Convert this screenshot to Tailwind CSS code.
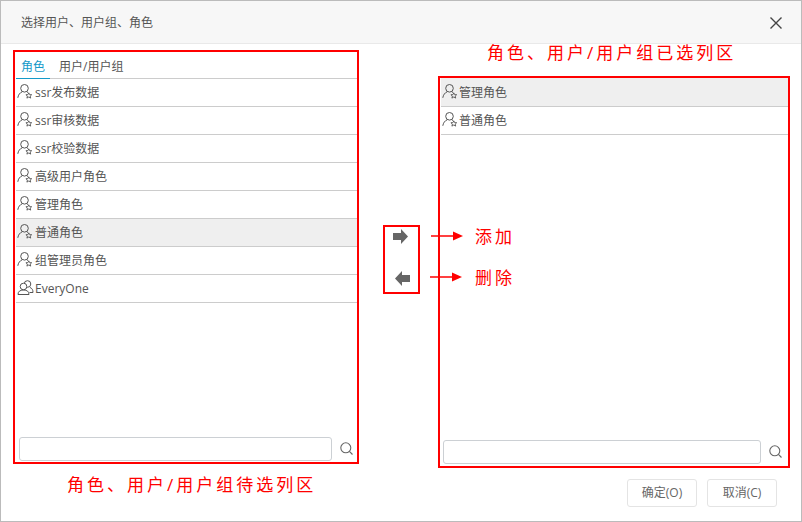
<!DOCTYPE html>
<html>
<head>
<meta charset="UTF-8">
<script src="https://cdn.jsdelivr.net/npm/@tailwindcss/browser@4"></script>
<title>选择用户、用户组、角色</title>
</head>
<body class="bg-white">
<svg width="0" height="0" class="absolute">
  <defs>
    <g id="role" fill="none" stroke="#555" stroke-width="1">
      <circle cx="7.500" cy="4.300" r="3.800"/>
      <path d="M0.800 13.800C1.300 10.800 2.800 8.800 5.200 7.800M9.800 7.800C10.400 8 10.900 8.300 11.300 8.700"/>
      <path d="M11.800 8.900l.9 1.800h2l-1.500 1.400.5 2-1.900-1.100-1.900 1.100.5-2-1.500-1.400h2z" stroke-width="0.900"/>
    </g>
    <g id="group" fill="none" stroke="#555" stroke-width="1">
      <circle cx="10.500" cy="4" r="3.300"/>
      <circle cx="6.500" cy="6.500" r="3.300" fill="#fff"/>
      <path d="M1 14.500C1 11.500 3 10 6.500 10S12 11.500 12 14.500z"/>
      <path d="M13 7.500C15 8.200 16 9.800 16 12.500H12.500"/>
    </g>
    <g id="search" fill="none" stroke="#666" stroke-width="1.100">
      <circle cx="5.800" cy="5.800" r="5"/>
      <path d="M9.400 9.400L12.500 12.500"/>
    </g>
  </defs>
</svg>

<div class="w-[802px] h-[522px] border border-[#bbb] flex flex-col overflow-hidden text-[12px] text-[#555] font-['Open_Sans','Noto_Sans_CJK_SC',sans-serif]">
  <!-- header -->
  <div class="h-[43px] shrink-0 bg-[#f7f7f7] border-b border-[#e9e9e9] flex items-center justify-between pl-5 pr-[18px] pt-px">
    <span>选择用户、用户组、角色</span>
    <svg width="14" height="14" viewBox="0 0 14 14" fill="none" stroke="#444" stroke-width="1.400"><path d="M1.500 1.500L12.500 12.500M12.500 1.500L1.500 12.500"/></svg>
  </div>

  <div class="flex flex-1 pl-3 min-h-0">
    <!-- left -->
    <div class="w-[346px] shrink-0 pt-[6px] flex flex-col">
      <div class="h-[414px] border-2 border-[#f00] flex flex-col pl-px">
        <div class="h-[27px] shrink-0 border-b border-[#ccc] flex items-end">
          <span class="w-[34px] h-[27px] -mb-px border-b border-[#159ac9] text-[#159ac9] text-center leading-[29px]">角色</span>
          <span class="ml-[9px] h-[26px] leading-[29px]">用户/用户组</span>
        </div>
        <div class="flex-1">
          <div class="h-7 border-b border-[#ccc] flex items-center pl-[1px] gap-px"><svg width="17" height="17" viewBox="0 0 17 17"><use href="#role"/></svg><span>ssr发布数据</span></div>
          <div class="h-7 border-b border-[#ccc] flex items-center pl-[1px] gap-px"><svg width="17" height="17" viewBox="0 0 17 17"><use href="#role"/></svg><span>ssr审核数据</span></div>
          <div class="h-7 border-b border-[#ccc] flex items-center pl-[1px] gap-px"><svg width="17" height="17" viewBox="0 0 17 17"><use href="#role"/></svg><span>ssr校验数据</span></div>
          <div class="h-7 border-b border-[#ccc] flex items-center pl-[1px] gap-px"><svg width="17" height="17" viewBox="0 0 17 17"><use href="#role"/></svg><span>高级用户角色</span></div>
          <div class="h-7 border-b border-[#ccc] flex items-center pl-[1px] gap-px"><svg width="17" height="17" viewBox="0 0 17 17"><use href="#role"/></svg><span>管理角色</span></div>
          <div class="h-7 border-b border-[#ccc] bg-[#efefef] flex items-center pl-[1px] gap-px"><svg width="17" height="17" viewBox="0 0 17 17"><use href="#role"/></svg><span>普通角色</span></div>
          <div class="h-7 border-b border-[#ccc] flex items-center pl-[1px] gap-px"><svg width="17" height="17" viewBox="0 0 17 17"><use href="#role"/></svg><span>组管理员角色</span></div>
          <div class="h-7 border-b border-[#ccc] flex items-center pl-[1px] gap-px"><svg width="17" height="17" viewBox="0 0 17 17"><use href="#group"/></svg><span>EveryOne</span></div>
        </div>
        <div class="flex items-center pl-[3px] pb-px">
          <div class="w-[313px] h-[24px] border border-[#ccd0d4] rounded-[3px]"></div>
          <svg class="ml-[8px]" width="14" height="14" viewBox="0 0 14 14"><use href="#search"/></svg>
        </div>
      </div>
      <div class="mt-[9px] pl-[54px] text-[17px] leading-[24px] tracking-[3px] text-[#f00] whitespace-nowrap">角色、用户/用户组待选列区</div>
    </div>

    <!-- middle -->
    <div class="w-[79px] shrink-0 pt-[181px] pl-[24px]">
      <div class="w-[37px] h-[69px] border-2 border-[#f00] flex flex-col justify-between pt-[2px] pb-[6px]">
        <svg width="15" height="15" viewBox="0 0 15 15" class="ml-[8px]"><path d="M0 4h8V0l7 7.500-7 7.500v-4H0z" fill="#666"/></svg>
        <svg width="15" height="15" viewBox="0 0 15 15" class="ml-[10px]"><path d="M15 4H7V0L0 7.500 7 15v-4h8z" fill="#666"/></svg>
      </div>
    </div>

    <!-- right -->
    <div class="w-[352px] shrink-0 flex flex-col">
      <div class="h-[32px] pl-[49px] text-[17px] leading-[18px] tracking-[3px] text-[#f00] whitespace-nowrap">角色、用户/用户组已选列区</div>
      <div class="h-[392px] border-2 border-[#f00] flex flex-col pl-px">
        <div class="flex-1">
          <div class="h-[29px] pt-px border-b border-[#ccc] bg-[#efefef] flex items-center pl-[1px]"><svg width="17" height="17" viewBox="0 0 17 17"><use href="#role"/></svg><span>管理角色</span></div>
          <div class="h-7 border-b border-[#ccc] flex items-center pl-[1px]"><svg width="17" height="17" viewBox="0 0 17 17"><use href="#role"/></svg><span>普通角色</span></div>
        </div>
        <div class="flex items-center pl-[2px] pb-[2px]">
          <div class="w-[318px] h-[24px] border border-[#ccd0d4] rounded-[3px]"></div>
          <svg class="ml-[8px]" width="14" height="14" viewBox="0 0 14 14"><use href="#search"/></svg>
        </div>
      </div>
      <div class="flex justify-end gap-[10px] mt-[11px] pr-[13px]">
        <div class="w-[70px] h-[28px] border border-[#e4e4e4] rounded-[3px] text-center leading-[26px] text-[#666]">确定(O)</div>
        <div class="w-[70px] h-[28px] border border-[#e4e4e4] rounded-[3px] text-center leading-[26px] text-[#666]">取消(C)</div>
      </div>
    </div>
  </div>
</div>

<!-- red callouts over the dialog -->
<div class="absolute left-[431px] top-[224px] flex items-center h-[24px] text-[#f00] text-[17px] tracking-[3px] font-['Noto_Sans_CJK_SC',sans-serif]">
  <svg width="32" height="12" viewBox="0 0 32 12"><path d="M0 6H22" stroke="#f00" stroke-width="1.500"/><path d="M22 1.500L32 6 22 10.500z" fill="#f00"/></svg>
  <span class="ml-[12px]">添加</span>
</div>
<div class="absolute left-[430px] top-[265px] flex items-center h-[24px] text-[#f00] text-[17px] tracking-[3px] font-['Noto_Sans_CJK_SC',sans-serif]">
  <svg width="32" height="12" viewBox="0 0 32 12"><path d="M0 6H22" stroke="#f00" stroke-width="1.500"/><path d="M22 1.500L32 6 22 10.500z" fill="#f00"/></svg>
  <span class="ml-[13px]">删除</span>
</div>
</body>
</html>
